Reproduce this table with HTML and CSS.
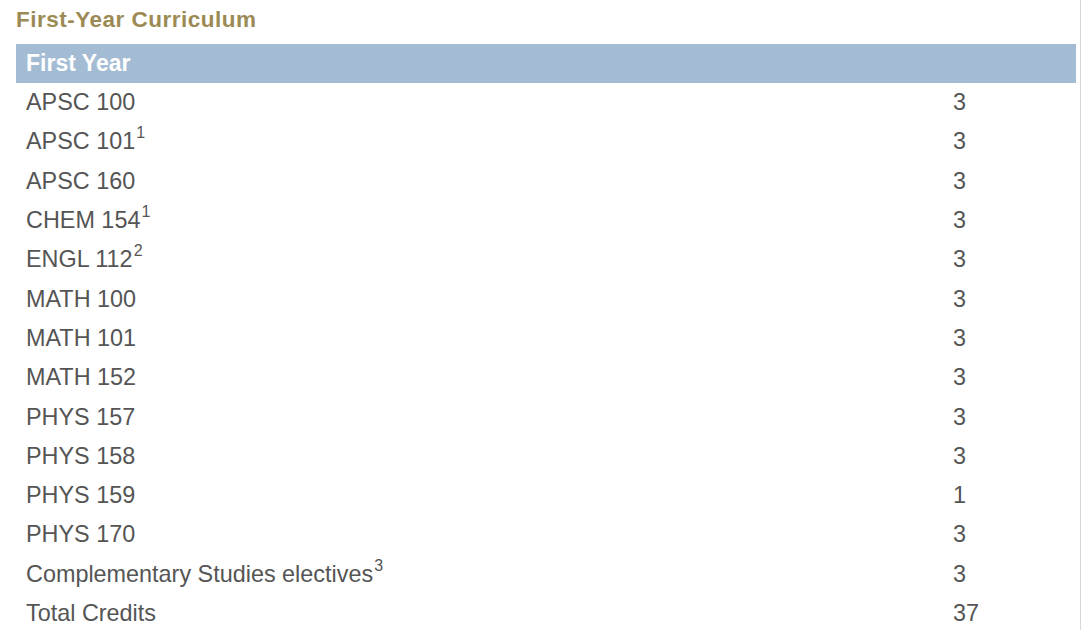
FILE: index.html
```html
<!DOCTYPE html>
<html>
<head>
<meta charset="utf-8">
<link rel="stylesheet" href="styles.css">
</head>
<body>
<div class="page">
  <h2 class="title">First-Year Curriculum</h2>
  <table class="curriculum">
    <thead>
      <tr><th colspan="2">First Year</th></tr>
    </thead>
    <tbody>
      <tr><td class="course">APSC 100</td><td class="cr">3</td></tr>
      <tr><td class="course">APSC 101<sup>1</sup></td><td class="cr">3</td></tr>
      <tr><td class="course">APSC 160</td><td class="cr">3</td></tr>
      <tr><td class="course">CHEM 154<sup>1</sup></td><td class="cr">3</td></tr>
      <tr><td class="course">ENGL 112<sup>2</sup></td><td class="cr">3</td></tr>
      <tr><td class="course">MATH 100</td><td class="cr">3</td></tr>
      <tr><td class="course">MATH 101</td><td class="cr">3</td></tr>
      <tr><td class="course">MATH 152</td><td class="cr">3</td></tr>
      <tr><td class="course">PHYS 157</td><td class="cr">3</td></tr>
      <tr><td class="course">PHYS 158</td><td class="cr">3</td></tr>
      <tr><td class="course">PHYS 159</td><td class="cr">1</td></tr>
      <tr><td class="course">PHYS 170</td><td class="cr">3</td></tr>
      <tr><td class="course">Complementary Studies electives<sup>3</sup></td><td class="cr">3</td></tr>
      <tr><td class="course">Total Credits</td><td class="cr">37</td></tr>
    </tbody>
  </table>
</div>
</body>
</html>
```
FILE: styles.css
```css
html, body {
  margin: 0;
  padding: 0;
  background: #ffffff;
}
.page {
  height: 630px;
  box-sizing: border-box;
  padding: 0 4px 0 16px;
  border-right: 1px solid #d8d8d8;
  font-family: "Liberation Sans", Arial, sans-serif;
}
.title {
  margin: 0;
  padding-top: 6px;
  height: 44px;
  box-sizing: border-box;
  font-size: 22.5px;
  letter-spacing: 0.5px;
  font-weight: bold;
  color: #9c8a55;
  line-height: 28px;
}
.curriculum {
  width: 1060px;
  border-collapse: collapse;
  color: #555555;
  font-size: 23.4px;
}
.curriculum th {
  background: #a4bcd3;
  color: #ffffff;
  font-weight: bold;
  font-size: 23px;
  text-align: left;
  height: 39px;
  padding: 0 10px;
  box-sizing: border-box;
}
.curriculum td {
  height: 39.3px;
  padding: 0 10px;
  box-sizing: border-box;
  vertical-align: middle;
}
.curriculum td.cr {
  width: 133px;
}
.curriculum sup {
  font-size: 16px;
  line-height: 0;
  vertical-align: 11px;
  margin-left: 1px;
}
```
